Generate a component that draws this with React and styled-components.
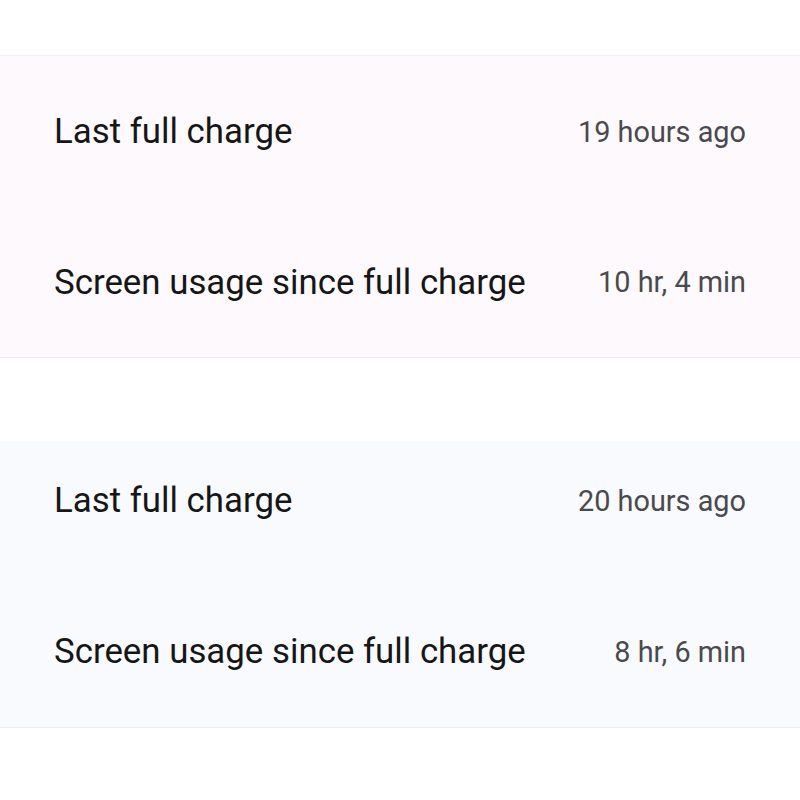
import React from "react";
import styled, { createGlobalStyle } from "styled-components";

const Global = createGlobalStyle`
  html, body { margin: 0; padding: 0; background: #ffffff; }
  body { font-family: Roboto, "Noto Sans", sans-serif; }
`;

const Page = styled.div`
  width: 800px;
  height: 800px;
  display: flex;
  flex-direction: column;
  background: #ffffff;
  overflow: hidden;
`;

const TopSpace = styled.div`
  height: 55px;
  border-bottom: 1px solid #f1eef1;
`;

const Gap = styled.div`
  height: 83px;
`;

const Section = styled.section`
  background: ${(p) => p.$bg};
  border-bottom: 1px solid ${(p) => p.$line};
  display: flex;
  flex-direction: column;
`;

const Row = styled.div`
  height: ${(p) => p.$h}px;
  display: flex;
  align-items: center;
  justify-content: space-between;
  padding: 0 54px ${(p) => p.$trim || 0}px 54px;
  box-sizing: border-box;
`;

const Label = styled.span`
  font-size: 34.85px;
  color: #161616;
`;

const Value = styled.span`
  font-size: 28.85px;
  color: #4a494d;
`;

const groups = [
  {
    bg: "#fdf9fd",
    line: "#f1eaf0",
    rows: [
      { label: "Last full charge", value: "19 hours ago", h: 151 },
      { label: "Screen usage since full charge", value: "10 hr, 4 min", h: 150 },
    ],
  },
  {
    bg: "#f9fafe",
    line: "#eceef3",
    rows: [
      { label: "Last full charge", value: "20 hours ago", h: 135, trim: 16 },
      { label: "Screen usage since full charge", value: "8 hr, 6 min", h: 151 },
    ],
  },
];

export default function App() {
  return (
    <Page>
      <Global />
      <TopSpace />
      {groups.map((g, i) => (
        <React.Fragment key={i}>
          {i > 0 && <Gap />}
          <Section $bg={g.bg} $line={g.line}>
            {g.rows.map((r) => (
              <Row key={r.label} $h={r.h} $trim={r.trim}>
                <Label>{r.label}</Label>
                <Value>{r.value}</Value>
              </Row>
            ))}
          </Section>
        </React.Fragment>
      ))}
    </Page>
  );
}
